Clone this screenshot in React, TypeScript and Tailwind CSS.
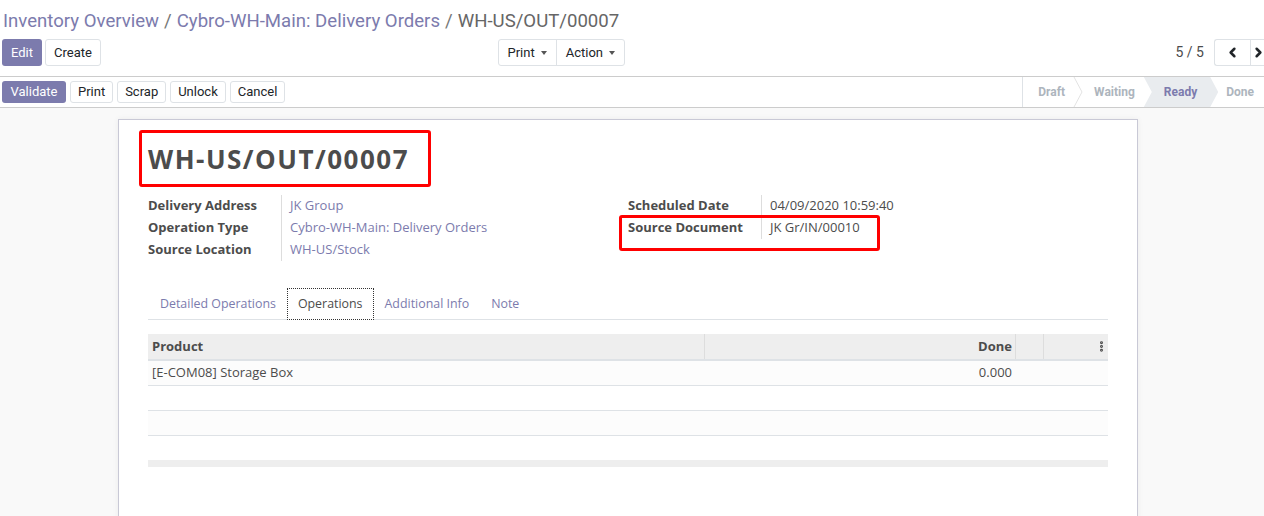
import { ChevronLeft, ChevronRight, EllipsisVertical } from 'lucide-react';

const sheetFont = "font-['Open_Sans',sans-serif]";

function Caret() {
  return <span className="inline-block ml-[6px] align-middle border-x-[3.5px] border-x-transparent border-t-[4px] border-t-[#555]" />;
}

function Field({ label, value, link }: { label: string; value: string; link?: boolean }) {
  return (
    <div className="flex h-[22px] items-center">
      <div className="w-[133px] shrink-0 font-bold text-[#4c4c4c]">{label}</div>
      <div className={`pl-[8px] border-l border-[#ddd] h-full flex items-center ${link ? 'text-[#7c7bad]' : 'text-[#4c4c4c]'}`}>
        {value}
      </div>
    </div>
  );
}

function Chevron() {
  return (
    <svg width="10" height="30" viewBox="0 0 10 30" className="shrink-0">
      <polyline points="1,0 9,15 1,30" fill="none" stroke="#e3e3e3" strokeWidth="1" />
    </svg>
  );
}

export default function App() {
  const tabs = ['Detailed Operations', 'Operations', 'Additional Info', 'Note'];

  return (
    <div className="w-[1264px] h-[516px] overflow-hidden flex flex-col bg-white font-['Roboto',sans-serif] text-[13px] text-[#212529]">
      {/* Control panel */}
      <div className="border-b border-[#ccc] pb-[10px]">
        <div className="h-[39px] pt-[3px] flex items-center pl-[3px] text-[18.6px] leading-none">
          <span className="text-[#7c7bad]">Inventory Overview</span>
          <span className="text-[#777] px-[5px]">/</span>
          <span className="text-[#7c7bad]">Cybro-WH-Main: Delivery Orders</span>
          <span className="text-[#777] px-[5px]">/</span>
          <span className="text-[#666]">WH-US/OUT/00007</span>
        </div>
        <div className="flex items-center h-[27px]">
          <div className="w-1/2 flex items-center pl-[2px] pr-[7px]">
            <button className="h-[27px] px-[9px] rounded-[3px] bg-[#7c7bad] text-white">Edit</button>
            <button className="h-[27px] px-[8px] ml-[3px] rounded-[3px] border border-[#dee2e6] bg-white text-[#212529]">Create</button>
            <div className="ml-auto flex h-[27px] border border-[#dee2e6] rounded-[3px]">
              <button className="px-[9px] flex items-center">Print<Caret /></button>
              <button className="px-[9px] flex items-center border-l border-[#dee2e6]">Action<Caret /></button>
            </div>
          </div>
          <div className="w-1/2 flex items-center justify-end">
            <span className="text-[#4c4c4c] text-[14px] mr-[10px]">5 / 5</span>
            <div className="flex h-[27px] border border-[#dee2e6] rounded-l-[3px] border-r-0">
              <button className="w-[35px] flex items-center justify-center text-[#212529]">
                <ChevronLeft size={15} strokeWidth={4} />
              </button>
              <button className="w-[14px] flex items-center justify-end border-l border-[#dee2e6] overflow-hidden">
                <ChevronRight size={15} strokeWidth={4} className="shrink-0 -mr-[2px]" />
              </button>
            </div>
          </div>
        </div>
      </div>

      {/* Status header */}
      <div className="h-[31px] flex items-center border-b border-[#ccc]">
        <div className="flex items-center gap-[4px] pl-[2px]">
          <button className="h-[22px] px-[8.5px] rounded-[3px] bg-[#7c7bad] text-white">Validate</button>
          {['Print', 'Scrap', 'Unlock', 'Cancel'].map((b) => (
            <button key={b} className="h-[22px] px-[7px] rounded-[3px] border border-[#dee2e6] bg-white">
              {b}
            </button>
          ))}
        </div>
        <div className="ml-auto flex h-[30px] items-center border-l border-[#dee2e6] text-[12px] font-bold text-[#adb5bd]">
          <span className="pl-[15px] pr-[8px]">Draft</span>
          <Chevron />
          <span className="pl-[11px] pr-[9px]">Waiting</span>
          <span className="h-[30px] pl-[20px] pr-[21px] flex items-center bg-[#e9ecef] text-[#7c7bad] [clip-path:polygon(0_0,calc(100%-8px)_0,100%_50%,calc(100%-8px)_100%,0_100%,8px_50%)]">
            Ready
          </span>
          <span className="pl-[8px] pr-[10px]">Done</span>
        </div>
      </div>

      {/* Content */}
      <div className="flex-1 bg-[#f9f9f9] pt-[11px]">
        <div className={`ml-[118px] w-[1020px] h-[420px] bg-white border border-[#c9c9d6] shadow-[0_0_6px_rgba(0,0,0,0.06)] ${sheetFont} text-[13px] text-[#4c4c4c]`}>
          <div className="pl-[20px] pt-[10px]">
            <div className="inline-flex items-center h-[57px] w-[292px] border-[3px] border-[#f00] rounded-[3px] pl-[6px]">
              <h1 className="text-[26px] font-bold text-[#4c4c4c] leading-none tracking-[1.5px]">WH-US/OUT/00007</h1>
            </div>
          </div>

          <div className="px-[29px] pt-[8px] flex">
            <div className="w-1/2">
              <Field label="Delivery Address" value="JK Group" link />
              <Field label="Operation Type" value="Cybro-WH-Main: Delivery Orders" link />
              <Field label="Source Location" value="WH-US/Stock" link />
            </div>
            <div className="w-1/2">
              <Field label="Scheduled Date" value="04/09/2020 10:59:40" />
              <div className="relative">
                <Field label="Source Document" value="JK Gr/IN/00010" />
                <div className="h-[13px]" />
                <div className="absolute left-[-9px] top-[-2px] w-[261px] h-[36px] border-[3px] border-[#f00] rounded-[3px]" />
              </div>
            </div>
          </div>

          <div className="mx-[29px] mt-[27px] flex border-b border-[#dee2e6] h-[32px] text-[12.4px]">
            {tabs.map((t) => (
              <div
                key={t}
                className={`h-[32px] flex items-center ${
                  t === 'Operations'
                    ? 'px-[10px] border border-dotted border-[#333] text-[#4c4c4c] bg-white'
                    : 'px-[11px] text-[#7c7bad]'
                } ${t === 'Detailed Operations' ? 'pl-[12px]' : ''}`}
              >
                {t}
              </div>
            ))}
          </div>

          <div className="mx-[29px] mt-[14px]">
            <div className="flex h-[27px] bg-[#eee] border-b-2 border-[#dee2e6] font-bold">
              <div className="w-[556px] px-[4px] flex items-center">Product</div>
              <div className="w-[311px] px-[3px] flex items-center justify-end border-l border-[#ddd]">Done</div>
              <div className="w-[28px] border-l border-[#ddd]" />
              <div className="flex-1 flex items-center justify-end border-l border-[#ddd]">
                <EllipsisVertical size={13} strokeWidth={3.5} />
              </div>
            </div>
            <div className="flex h-[25px] bg-[#fcfcfc] border-b border-[#dee2e6]">
              <div className="w-[556px] px-[4px] flex items-center">[E-COM08] Storage Box</div>
              <div className="w-[311px] px-[3px] flex items-center justify-end">0.000</div>
            </div>
            <div className="h-[25px] bg-white border-b border-[#dee2e6]" />
            <div className="h-[25px] bg-[#fcfcfc] border-b border-[#dee2e6]" />
            <div className="h-[24px] bg-white" />
            <div className="h-[7px] bg-[#eee]" />
          </div>
        </div>
      </div>
    </div>
  );
}
